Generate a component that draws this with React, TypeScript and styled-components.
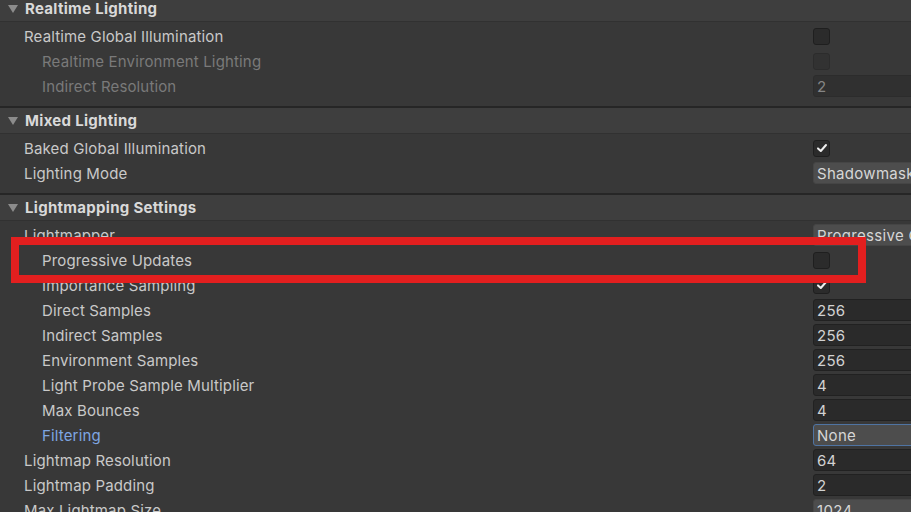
import styled, { createGlobalStyle } from 'styled-components';

const GlobalStyle = createGlobalStyle`
  html, body {
    margin: 0;
    padding: 0;
    background: #383838;
    overflow: hidden;
  }
  body {
    font-family: Inter, "Noto Sans", sans-serif;
  }
`;

type Field =
  | { kind: 'check'; checked?: boolean; disabled?: boolean }
  | { kind: 'number'; value: string; disabled?: boolean }
  | { kind: 'dropdown'; value: string; focused?: boolean };

type Row = {
  label: string;
  level?: number;
  tone?: 'normal' | 'disabled' | 'link';
  field: Field;
};

type Section = { title: string; rows: Row[] };

const sections: Section[] = [
  {
    title: 'Realtime Lighting',
    rows: [
      { label: 'Realtime Global Illumination', field: { kind: 'check' } },
      { label: 'Realtime Environment Lighting', level: 1, tone: 'disabled', field: { kind: 'check', disabled: true } },
      { label: 'Indirect Resolution', level: 1, tone: 'disabled', field: { kind: 'number', value: '2', disabled: true } },
    ],
  },
  {
    title: 'Mixed Lighting',
    rows: [
      { label: 'Baked Global Illumination', field: { kind: 'check', checked: true } },
      { label: 'Lighting Mode', field: { kind: 'dropdown', value: 'Shadowmask' } },
    ],
  },
  {
    title: 'Lightmapping Settings',
    rows: [
      { label: 'Lightmapper', field: { kind: 'dropdown', value: 'Progressive GPU (Preview)' } },
      { label: 'Progressive Updates', level: 1, field: { kind: 'check' } },
      { label: 'Importance Sampling', level: 1, field: { kind: 'check', checked: true } },
      { label: 'Direct Samples', level: 1, field: { kind: 'number', value: '256' } },
      { label: 'Indirect Samples', level: 1, field: { kind: 'number', value: '256' } },
      { label: 'Environment Samples', level: 1, field: { kind: 'number', value: '256' } },
      { label: 'Light Probe Sample Multiplier', level: 1, field: { kind: 'number', value: '4' } },
      { label: 'Max Bounces', level: 1, field: { kind: 'number', value: '4' } },
      { label: 'Filtering', level: 1, tone: 'link', field: { kind: 'dropdown', value: 'None', focused: true } },
      { label: 'Lightmap Resolution', field: { kind: 'number', value: '64' } },
      { label: 'Lightmap Padding', field: { kind: 'number', value: '2' } },
      { label: 'Max Lightmap Size', field: { kind: 'dropdown', value: '1024' } },
    ],
  },
];

const Check = () => (
  <svg width="12" height="12" viewBox="0 0 12 12">
    <path d="M2 6.4 L4.8 9 L10 3" fill="none" stroke="#eeeeee" strokeWidth="2" strokeLinecap="round" strokeLinejoin="round" />
  </svg>
);

const FieldView = ({ field }: { field: Field }) => {
  if (field.kind === 'check') {
    return (
      <CheckBox $disabled={field.disabled}>{field.checked && <Check />}</CheckBox>
    );
  }
  if (field.kind === 'number') {
    return <NumberBox $disabled={field.disabled}>{field.value}</NumberBox>;
  }
  return <DropBox $focused={field.focused}>{field.value}</DropBox>;
};

export default function App() {
  return (
    <>
      <GlobalStyle />
      <Inspector>
        {sections.map((s) => (
          <SectionBlock key={s.title}>
            <Header>
              <Arrow />
              <HeaderTitle>{s.title}</HeaderTitle>
            </Header>
            <Body>
              {s.rows.map((r) => (
                <PropRow key={r.label}>
                  <Label $level={r.level ?? 0} $tone={r.tone ?? 'normal'}>
                    {r.label}
                  </Label>
                  <FieldView field={r.field} />
                </PropRow>
              ))}
            </Body>
          </SectionBlock>
        ))}
        <Highlight />
      </Inspector>
    </>
  );
}

const Inspector = styled.div`
  position: relative;
  width: 960px;
  margin-top: -4px;
`;

const SectionBlock = styled.section`
  border-bottom: 2px solid #262626;
`;

const Header = styled.div`
  height: 25px;
  display: flex;
  align-items: center;
  gap: 7px;
  padding-left: 8px;
  background: #3e3e3e;
  border-bottom: 1px solid #313131;
`;

const Arrow = styled.span`
  width: 0;
  height: 0;
  border-left: 5.5px solid transparent;
  border-right: 5.5px solid transparent;
  border-top: 8px solid #8c8c8c;
  margin-top: 1px;
`;

const HeaderTitle = styled.span`
  font-size: 15px;
  font-weight: 700;
  color: #d9d9d9;
  letter-spacing: 0.3px;
`;

const Body = styled.div`
  padding: 1.5px 0 7.5px;
`;

const PropRow = styled.div`
  height: 25px;
  display: grid;
  grid-template-columns: 813px 1fr;
  align-items: center;
`;

const toneColor = {
  normal: '#c9c9c9',
  disabled: '#7a7a7a',
  link: '#7fa6e2',
};

const Label = styled.span<{ $level: number; $tone: 'normal' | 'disabled' | 'link' }>`
  padding-left: ${({ $level }) => 24 + $level * 18}px;
  font-size: 15px;
  letter-spacing: 0.15px;
  color: ${({ $tone }) => toneColor[$tone]};
  white-space: nowrap;
`;

const CheckBox = styled.div<{ $disabled?: boolean }>`
  width: 17px;
  height: 17px;
  box-sizing: border-box;
  border-radius: 3px;
  border: 1px solid ${({ $disabled }) => ($disabled ? '#2c2c2c' : '#1f1f1f')};
  background: ${({ $disabled }) => ($disabled ? '#323232' : '#2b2b2b')};
  display: flex;
  align-items: center;
  justify-content: center;
`;

const fieldBase = `
  height: 22px;
  box-sizing: border-box;
  border-radius: 3px;
  padding-left: 3px;
  font-size: 15px;
  letter-spacing: 0.3px;
  display: flex;
  align-items: center;
  white-space: nowrap;
  overflow: hidden;
`;

const NumberBox = styled.div<{ $disabled?: boolean }>`
  ${fieldBase}
  background: ${({ $disabled }) => ($disabled ? '#303030' : '#2a2a2a')};
  border: 1px solid ${({ $disabled }) => ($disabled ? '#2c2c2c' : '#212121')};
  color: ${({ $disabled }) => ($disabled ? '#858585' : '#d2d2d2')};
`;

const DropBox = styled.div<{ $focused?: boolean }>`
  ${fieldBase}
  background: #4d4d4d;
  border: 1px solid ${({ $focused }) => ($focused ? '#4f74a3' : '#454545')};
  color: #d6d6d6;
`;

const Highlight = styled.div`
  position: absolute;
  left: 11px;
  top: 241px;
  width: 855px;
  height: 46px;
  box-sizing: border-box;
  border: 8px solid #e21f1f;
  pointer-events: none;
`;
